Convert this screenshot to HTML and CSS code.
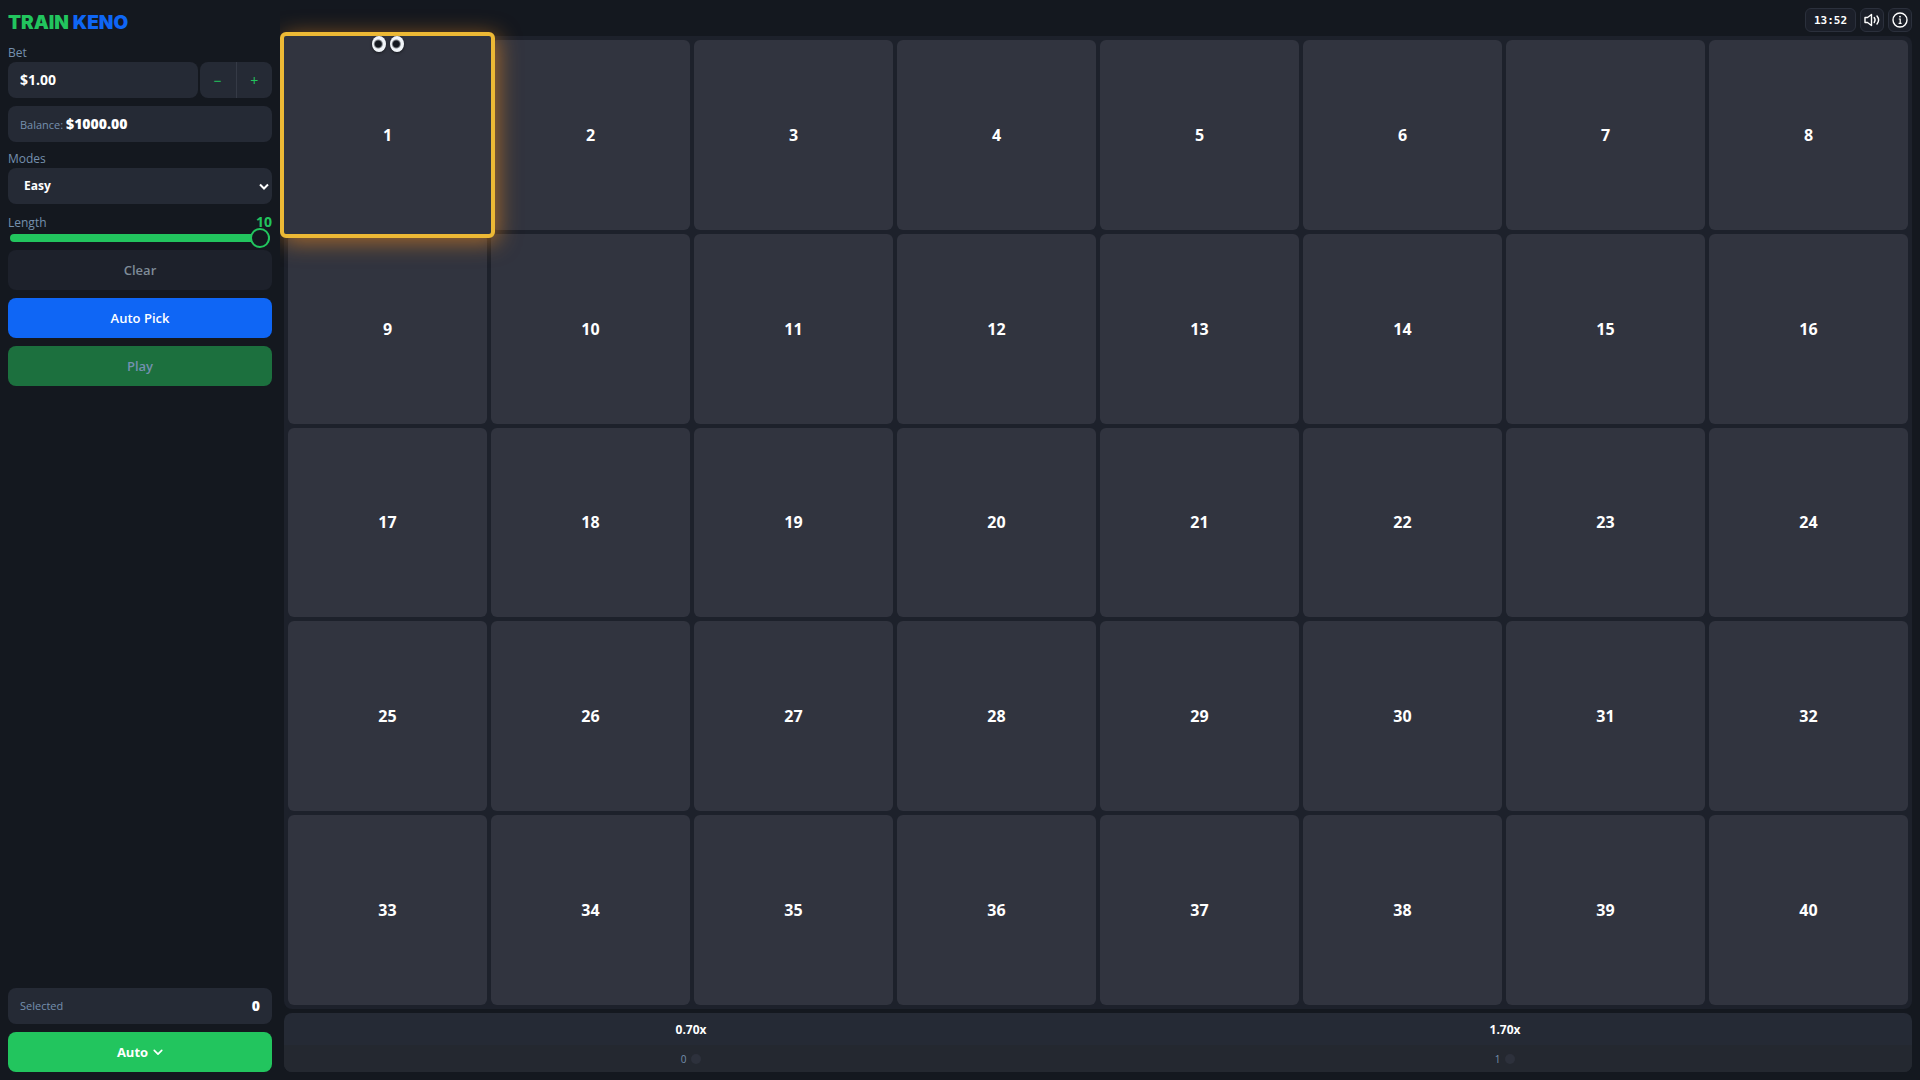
FILE: index.html
```html
<!DOCTYPE html>
<html lang="en">
  <head>
    <meta charset="UTF-8" />
    <meta name="viewport" content="width=device-width, initial-scale=1.0" />
    <title>Train Keno</title>
    <link rel="stylesheet" href="styles.css">
  </head>
  <body>
    <aside class="sidebar">
      <h1 class="logo"><span class="logo-train">TRAIN</span> <span class="logo-keno">KENO</span></h1>

      <label class="label" for="bet">Bet</label>
      <div class="bet-row">
        <input class="field bet-input" id="bet" type="text" value="$1.00" />
        <div class="stepper">
          <button type="button" aria-label="Decrease bet">−</button>
          <button type="button" aria-label="Increase bet">+</button>
        </div>
      </div>

      <div class="field balance">
        <span class="muted">Balance: </span><strong>$1000.00</strong>
      </div>

      <label class="label" for="mode">Modes</label>
      <div class="select-wrap">
        <select class="field" id="mode">
          <option>Easy</option>
          <option>Medium</option>
          <option>Hard</option>
        </select>
        <svg class="select-arrow" viewBox="0 0 10 8" width="10" height="8" fill="none" stroke="currentColor" stroke-width="2">
          <path d="M1 1.5 L5 5.5 L9 1.5" />
        </svg>
      </div>

      <div class="length-head">
        <label class="label" for="length">Length</label>
        <output for="length" id="lengthValue">10</output>
      </div>
      <input class="slider" id="length" type="range" min="1" max="10" value="10" />

      <button type="button" class="btn btn-clear" disabled>Clear</button>
      <button type="button" class="btn btn-pick">Auto Pick</button>
      <button type="button" class="btn btn-play" disabled>Play</button>

      <div class="sidebar-bottom">
        <div class="field selected">
          <span class="muted">Selected</span>
          <strong id="selectedCount">0</strong>
        </div>
        <button type="button" class="btn btn-auto">
          Auto
          <svg viewBox="0 0 12 8" width="10" height="7" fill="none" stroke="currentColor" stroke-width="2" stroke-linecap="round" stroke-linejoin="round">
            <path d="M1.5 1.5 L6 6 L10.5 1.5" />
          </svg>
        </button>
      </div>
    </aside>

    <main class="main">
      <header class="topbar">
        <time class="clock">13:52</time>
        <button type="button" class="icon-btn" aria-label="Sound">
          <svg viewBox="0 0 16 16" width="16" height="16" fill="none" stroke="currentColor" stroke-width="1.4" stroke-linejoin="round" stroke-linecap="round">
            <path d="M1 5.5 H3.5 L7.5 2.5 V13.5 L3.5 10.5 H1 Z" />
            <path d="M10.2 5.5 Q12 8 10.2 10.5" />
            <path d="M13 4 Q16.2 8 13 12" />
          </svg>
        </button>
        <button type="button" class="icon-btn" aria-label="Info">
          <svg viewBox="0 0 16 16" width="16" height="16" fill="none" stroke="currentColor" stroke-width="1.4">
            <circle cx="8" cy="8" r="7" />
            <path d="M6.8 7 H8.2 V11 M6.6 11.4 H9.6" stroke-width="1.2" />
            <circle cx="8" cy="4.7" r="0.9" fill="currentColor" stroke="none" />
          </svg>
        </button>
      </header>

      <div class="board" id="board"></div>

      <div class="payouts">
        <div class="payout">
          <div class="payout-mult">0.70x</div>
          <div class="payout-hits">0 <i class="gem"></i></div>
        </div>
        <div class="payout">
          <div class="payout-mult">1.70x</div>
          <div class="payout-hits">1 <i class="gem"></i></div>
        </div>
      </div>
    </main>

    <script>
      const board = document.getElementById("board");

      for (let i = 1; i <= 40; i++) {
        const cell = document.createElement("button");
        cell.type = "button";
        cell.className = "cell";
        cell.textContent = i;
        board.appendChild(cell);
      }

      // The train head sits on the first tile
      const head = board.firstElementChild;
      head.classList.add("head");
      const eyes = document.createElement("span");
      eyes.className = "eyes";
      eyes.innerHTML = '<i class="eye"></i><i class="eye"></i>';
      head.appendChild(eyes);

      const slider = document.getElementById("length");
      slider.addEventListener("input", () => {
        document.getElementById("lengthValue").textContent = slider.value;
      });
    </script>
  </body>
</html>
```

FILE: styles.css
```css
* {
  margin: 0;
  padding: 0;
  box-sizing: border-box;
}

body {
  display: flex;
  min-height: 100vh;
  background: #14181f;
  color: #fff;
  font-family: "Open Sans", "Noto Sans", sans-serif;
  font-size: 14px;
}

button,
input,
select {
  font: inherit;
  color: inherit;
  border: none;
  outline: none;
}

/* Sidebar */

.sidebar {
  position: relative;
  z-index: 3;
  display: flex;
  flex-direction: column;
  flex: 0 0 280px;
  padding: 8px;
  background: #14181f;
}

.logo {
  margin-bottom: 6px;
  font-family: "Inter", "Open Sans", sans-serif;
  font-size: 19px;
  line-height: 30px;
  font-weight: 900;
}

.logo-train {
  color: #22c55e;
}

.logo-keno {
  color: #0f66f5;
}

.label,
.muted {
  color: #7590ae;
  font-size: 12px;
  font-weight: 400;
}

.label {
  line-height: 18px;
}

.field {
  width: 100%;
  height: 36px;
  padding: 0 12px;
  border-radius: 8px;
  background: #252a35;
  font-size: 14px;
  line-height: 36px;
  font-weight: 700;
}

.bet-row {
  display: flex;
  gap: 2px;
  margin-bottom: 8px;
}

.bet-input {
  flex: 1;
  min-width: 0;
}

.stepper {
  display: flex;
  flex: 0 0 72px;
  border-radius: 8px;
  background: #252a35;
  overflow: hidden;
}

.stepper button {
  flex: 1;
  background: none;
  color: #22c55e;
  font-size: 14px;
}

.stepper button + button {
  border-left: 1px solid #353a46;
}

.balance {
  margin-bottom: 8px;
}

.balance .muted,
.selected .muted {
  font-size: 11px;
}

.select-wrap {
  position: relative;
  margin-bottom: 8px;
}

.select-wrap select {
  display: block;
  appearance: none;
  padding: 0 16px;
  font-size: 12px;
}

.select-arrow {
  position: absolute;
  top: 15px;
  right: 3px;
  pointer-events: none;
}

.length-head {
  display: flex;
  justify-content: space-between;
  height: 17px;
}

.length-head .label {
  line-height: 22px;
}

.length-head output {
  color: #22c55e;
  font-size: 14px;
  line-height: 20px;
  font-weight: 700;
}

.slider {
  appearance: none;
  height: 18px;
  margin: 0 2px 3px;
  background: none;
}

.slider::-webkit-slider-runnable-track {
  height: 8px;
  border-radius: 4px;
  background: #22c55e;
}

.slider::-webkit-slider-thumb {
  appearance: none;
  width: 20px;
  height: 20px;
  margin-top: -6px;
  border: 2px solid #22c55e;
  border-radius: 50%;
  background: #14181f;
}

.btn {
  width: 100%;
  height: 40px;
  margin-bottom: 8px;
  border-radius: 8px;
  font-size: 13px;
  font-weight: 600;
}

.btn-clear {
  background: #1d212b;
  color: #7f8b97;
}

.btn-pick {
  background: #0f66f5;
}

.btn-play {
  background: #1c703e;
  color: #7590ae;
}

.sidebar-bottom {
  margin-top: auto;
}

.selected {
  display: flex;
  align-items: center;
  justify-content: space-between;
  margin-bottom: 8px;
}

.btn-auto {
  display: flex;
  align-items: center;
  justify-content: center;
  gap: 5px;
  margin-bottom: 0;
  background: #22c55e;
  font-weight: 700;
}

/* Main area */

.main {
  display: flex;
  flex-direction: column;
  flex: 1;
  gap: 4px;
  min-width: 0;
  padding: 8px 8px 8px 4px;
}

.topbar {
  display: flex;
  justify-content: flex-end;
  gap: 4px;
  height: 24px;
}

.clock,
.icon-btn {
  display: flex;
  align-items: center;
  justify-content: center;
  border: 1px solid #2b303c;
  border-radius: 6px;
  background: #1b1f29;
}

.clock {
  width: 51px;
  font-family: "DejaVu Sans Mono", monospace;
  font-size: 11px;
  font-weight: 700;
}

.icon-btn {
  width: 24px;
}

.board {
  display: grid;
  flex: 1;
  grid-template-columns: repeat(8, 1fr);
  grid-template-rows: repeat(5, 1fr);
  gap: 4px;
  padding: 4px;
  border-radius: 8px;
  background: #1d212b;
}

.cell {
  border-radius: 6px;
  background: #31343f;
  font-size: 16px;
  font-weight: 700;
}

.head {
  position: relative;
  z-index: 2;
}

.head::after {
  content: "";
  position: absolute;
  inset: -8px;
  border: 4px solid #edb935;
  border-radius: 6px;
  background: #31343f;
  box-shadow: 3px 4px 22px rgba(245, 140, 30, 0.6);
  z-index: -1;
}

.eyes {
  position: absolute;
  top: -4px;
  left: 0;
  right: 0;
  display: flex;
  justify-content: center;
  gap: 4px;
}

.eye {
  width: 14px;
  height: 16px;
  border-radius: 50%;
  background: radial-gradient(circle at 45% 50%, #14181f 3px, #f1f5f9 5px);
  box-shadow: 0 1px 3px rgba(0, 0, 0, 0.5);
}

.payouts {
  display: flex;
  border-radius: 8px;
  background: #252a35;
  overflow: hidden;
}

.payout {
  flex: 1;
  text-align: center;
}

.payout-mult {
  padding-top: 2px;
  font-size: 12px;
  line-height: 30px;
  font-weight: 700;
}

.payout-hits {
  display: flex;
  align-items: center;
  justify-content: center;
  gap: 5px;
  height: 27px;
  background: #242830;
  color: #7590ae;
  font-size: 10px;
}

.gem {
  width: 10px;
  height: 10px;
  border-radius: 50%;
  background: #2d313c;
}
```
